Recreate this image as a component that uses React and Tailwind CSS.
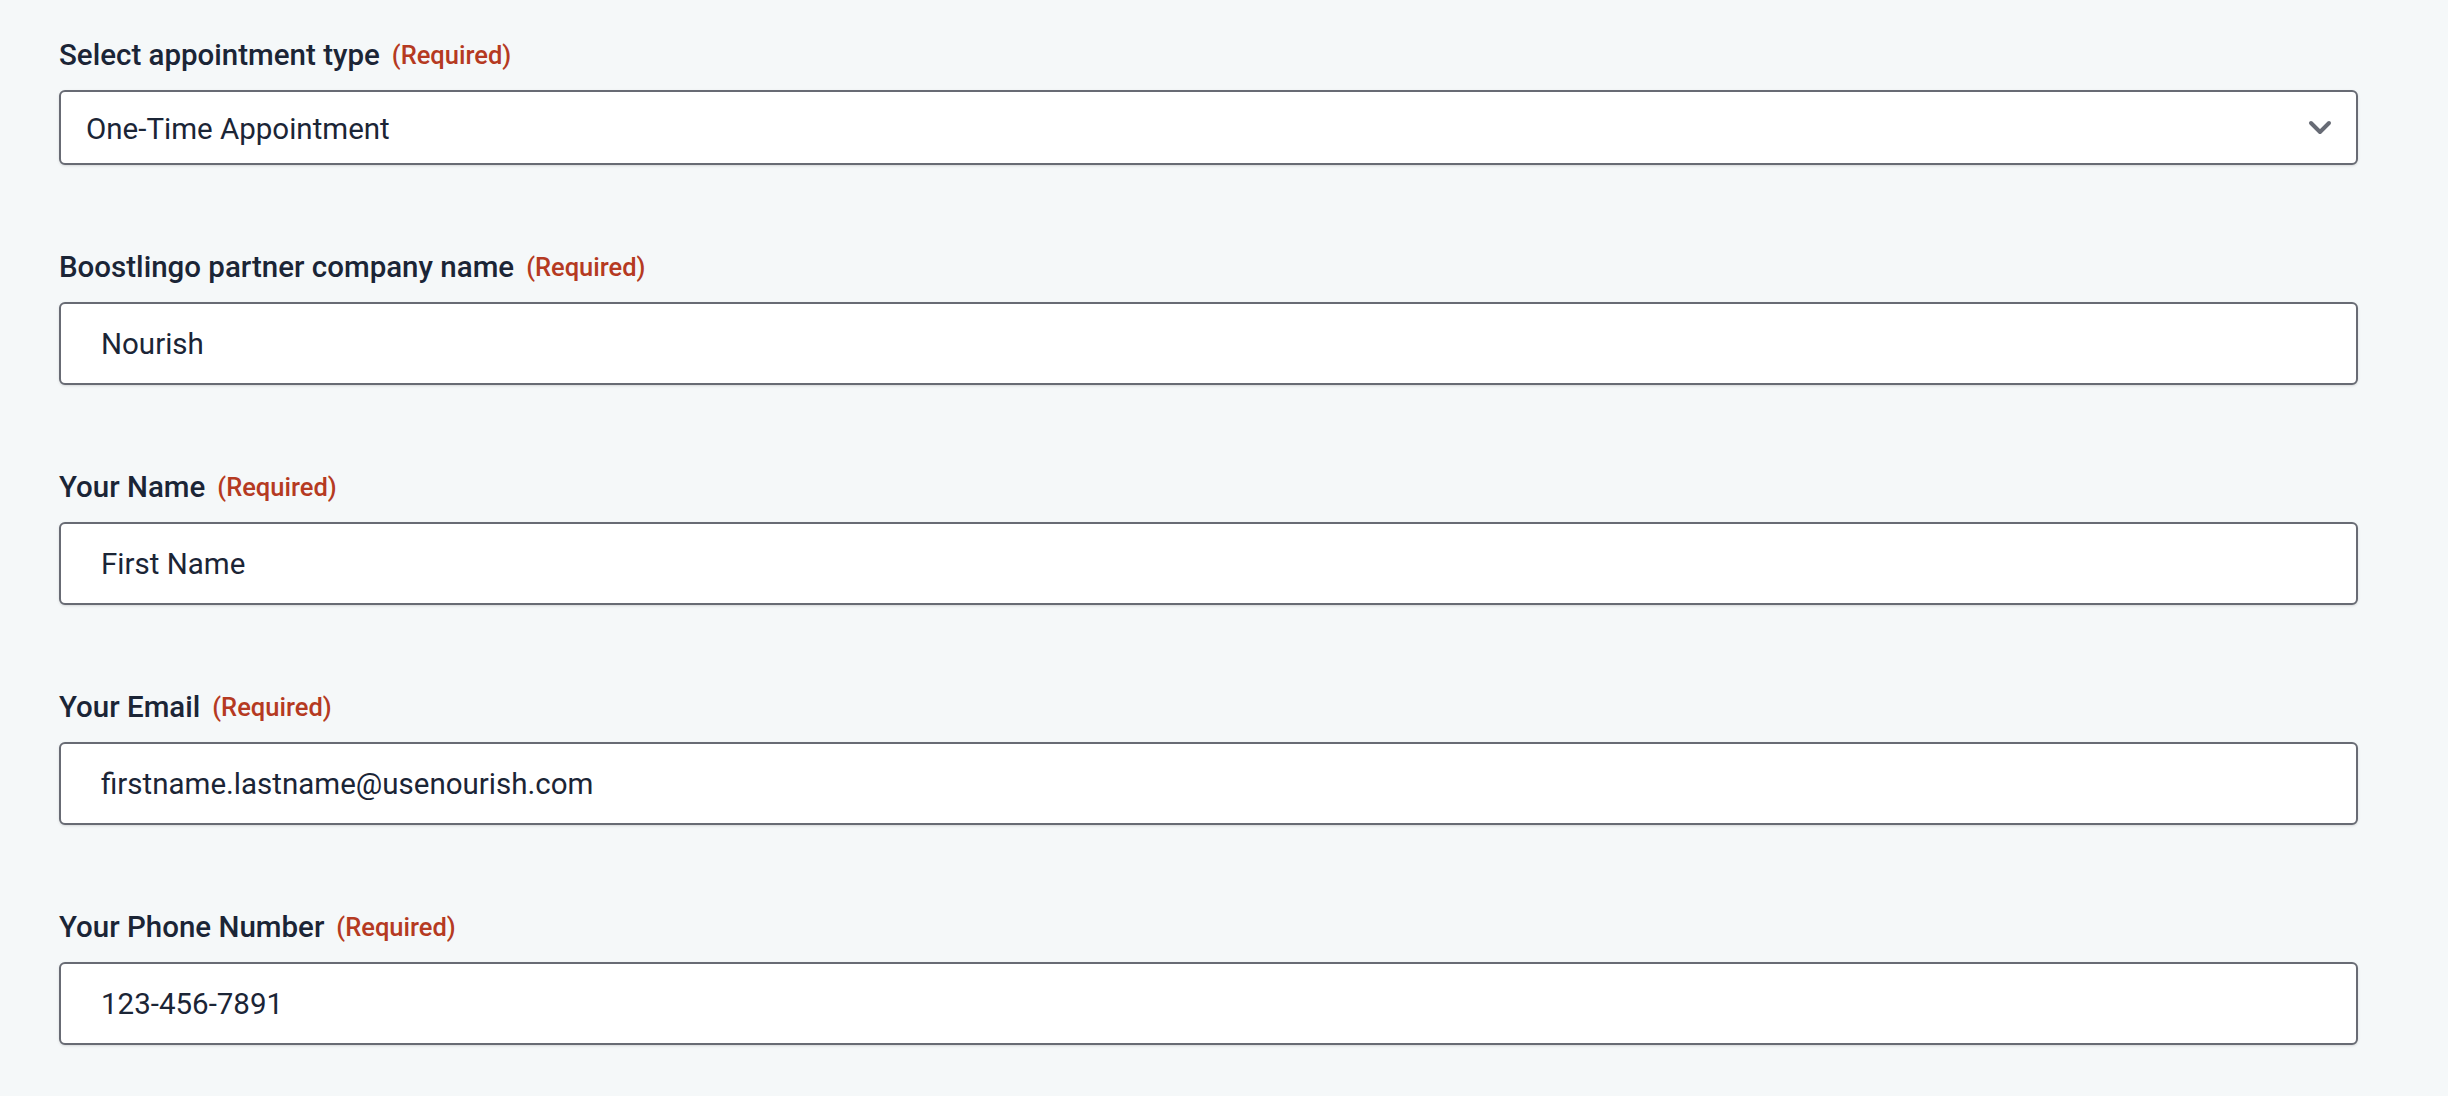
import React from 'react';

const fields = [
  { label: 'Boostlingo partner company name', value: 'Nourish' },
  { label: 'Your Name', value: 'First Name' },
  { label: 'Your Email', value: 'firstname.lastname@usenourish.com' },
  { label: 'Your Phone Number', value: '123-456-7891' },
];

function Label({ children }) {
  return (
    <div className="flex items-center h-[36px] mb-[17px] pt-[2px]">
      <span className="text-[29.5px] font-medium text-[#1b2536] leading-none">{children}</span>
      <span className="ml-[12px] text-[25.5px] font-medium text-[#b53a22] leading-none">(Required)</span>
    </div>
  );
}

export default function App() {
  return (
    <div className="min-h-[1096px] w-full bg-[#f5f8f9] pt-[37px] pl-[59px] font-['Roboto',sans-serif]">
      <div className="w-[2299px] flex flex-col">
        <div className="mb-[84px]">
          <Label>Select appointment type</Label>
          <div className="h-[75px] flex items-center justify-between bg-white border-2 border-[#686b74] rounded-[6px] shadow-sm pl-[25px] pr-[24px]">
            <span className="text-[29.5px] text-[#1b2536] pt-[3px]">One-Time Appointment</span>
            <svg width="24" height="16" viewBox="0 0 24 16" fill="none">
              <polyline points="3,3 12,12 21,3" stroke="#676b75" strokeWidth="4" strokeLinecap="round" strokeLinejoin="round" />
            </svg>
          </div>
        </div>
        {fields.map((f) => (
          <div key={f.label} className="mb-[84px]">
            <Label>{f.label}</Label>
            <div className="h-[83px] flex items-center bg-white border-2 border-[#686b74] rounded-[6px] shadow-sm pl-[40px]">
              <span className="text-[29.5px] text-[#1b2536] pt-[2px]">{f.value}</span>
            </div>
          </div>
        ))}
      </div>
    </div>
  );
}
